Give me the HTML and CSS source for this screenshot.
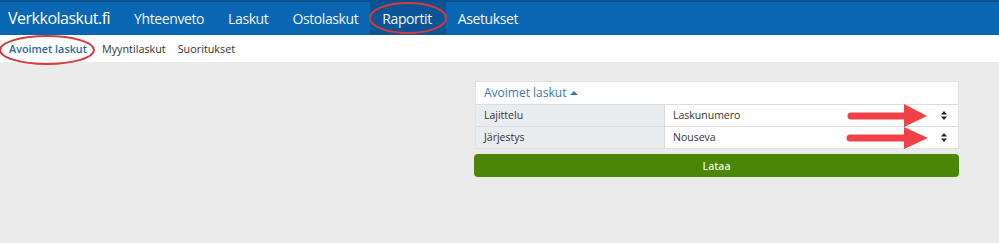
FILE: index.html
```html
<!DOCTYPE html>
<html lang="fi">
<head>
  <meta charset="UTF-8">
  <title>Verkkolaskut.fi - Raportit</title>
  <link rel="stylesheet" href="styles.css">
</head>
<body>

<header class="topnav">
  <a class="brand" href="#">Verkkolaskut.fi</a>
  <nav class="mainmenu">
    <a href="#">Yhteenveto</a>
    <a href="#">Laskut</a>
    <a href="#">Ostolaskut</a>
    <a href="#" class="active">Raportit</a>
    <a href="#">Asetukset</a>
  </nav>
</header>

<div class="subnav">
  <a href="#" class="active">Avoimet laskut</a>
  <a href="#">Myyntilaskut</a>
  <a href="#">Suoritukset</a>
</div>

<div class="content">
  <div class="panel">
    <div class="panel-head">Avoimet laskut <span class="caret"></span></div>
    <div class="row">
      <div class="label">Lajittelu</div>
      <div class="select">Laskunumero
        <svg class="updown" width="6" height="9" viewBox="0 0 6 9"><path d="M3 0 L6 3.5 H0 Z M0 5.5 H6 L3 9 Z" fill="#222"/></svg>
      </div>
    </div>
    <div class="row">
      <div class="label">Järjestys</div>
      <div class="select">Nouseva
        <svg class="updown" width="6" height="9" viewBox="0 0 6 9"><path d="M3 0 L6 3.5 H0 Z M0 5.5 H6 L3 9 Z" fill="#222"/></svg>
      </div>
    </div>
  </div>
  <button class="load-btn">Lataa</button>
</div>

<!-- punaiset merkinnät kuvakaappauksen päällä -->
<svg class="marks" width="999" height="243" viewBox="0 0 999 243">
  <ellipse cx="408" cy="18" rx="38" ry="15" fill="none" stroke="#d8393b" stroke-width="2"/>
  <ellipse cx="47" cy="50" rx="47" ry="14" fill="none" stroke="#d8393b" stroke-width="2"/>
  <line x1="851" y1="116" x2="906" y2="116" stroke="#ef4146" stroke-width="7" stroke-linecap="round"/>
  <polygon points="904,104 927,116 904,127" fill="#ef4146"/>
  <line x1="850" y1="138" x2="906" y2="138" stroke="#ef4146" stroke-width="7" stroke-linecap="round"/>
  <polygon points="904,127 928,138 904,149" fill="#ef4146"/>
</svg>

</body>
</html>
```

FILE: styles.css
```css
body {
  margin: 0;
  font-family: 'Open Sans', 'Liberation Sans', sans-serif;
  background: #ebebeb;
  width: 999px;
  height: 243px;
  overflow: hidden;
  position: relative;
}

a {
  text-decoration: none;
}

.topnav {
  display: flex;
  align-items: stretch;
  height: 33px;
  background: #0966b2;
  border-top: 2px solid #0b4f8d;
}

.brand {
  color: #fff;
  font-size: 16px;
  letter-spacing: -0.5px;
  padding: 0 12px 0 8px;
  line-height: 32px;
}

.mainmenu {
  display: flex;
}

.mainmenu a {
  color: #f2f6fa;
  font-size: 14px;
  letter-spacing: -0.4px;
  line-height: 33px;
  padding: 0 12px;
}

.mainmenu a.active {
  background: #0b5495;
  padding-right: 14px;
}

.subnav {
  display: flex;
  gap: 12px;
  height: 27px;
  align-items: center;
  background: #fff;
  padding-left: 9px;
}

.subnav a {
  color: #333;
  font-size: 10.8px;
}

.subnav a.active {
  color: #2b6a9e;
  font-weight: 600;
  margin-right: 3px;
}

.content {
  width: 484px;
  margin: 19px 0 0 475px;
}

.panel {
  background: #fff;
  border: 1px solid #e2e2e2;
}

.panel-head {
  height: 22px;
  line-height: 22px;
  padding-left: 8px;
  color: #3a78ac;
  font-size: 12px;
}

.caret {
  display: inline-block;
  width: 0;
  height: 0;
  border-left: 4px solid transparent;
  border-right: 4px solid transparent;
  border-bottom: 4px solid #3a78ac;
  vertical-align: 2px;
}

.row {
  display: flex;
  height: 21px;
  border-top: 1px solid #dcdcdc;
  font-size: 10.5px;
  color: #333;
}

.label {
  width: 180px;
  padding-left: 8px;
  line-height: 21px;
  background: #eaedf0;
  border-right: 1px solid #dcdcdc;
}

.select {
  flex: 1;
  display: flex;
  justify-content: space-between;
  align-items: center;
  padding: 0 11px 0 8px;
  line-height: 21px;
}

.load-btn {
  display: block;
  width: 485px;
  margin: 5px 0 0 -1px;
  height: 23px;
  border: none;
  border-radius: 4px;
  background: #4b8607;
  color: #e8f4d8;
  font-family: inherit;
  font-size: 10.5px;
  font-weight: 600;
}

.marks {
  position: absolute;
  left: 0;
  top: 0;
  pointer-events: none;
}
```
